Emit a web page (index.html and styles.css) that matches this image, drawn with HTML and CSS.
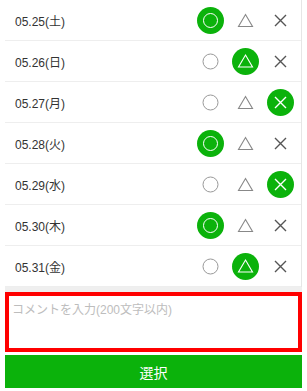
FILE: index.html
```html
<!DOCTYPE html>
<html lang="ja">
<head>
<meta charset="utf-8">
<link rel="stylesheet" href="styles.css">
</head>
<body>
<div class="page">
  <ul class="list">
    <li class="row"><span class="date">05.25(土)</span><span class="opts"><span class="cell"><svg class="on" viewBox="0 0 27 27"><circle cx="13.5" cy="13.5" r="13.5" fill="#0bb20b"/><circle cx="13.5" cy="13.5" r="7" fill="none" stroke="#fff" stroke-width="1"/></svg></span><span class="cell"><svg class="off" viewBox="0 0 27 27"><path d="M13.5 7.5 L20.5 19.5 L6.5 19.5 Z" fill="none" stroke="#888" stroke-width="1.1" stroke-linejoin="miter"/></svg></span><span class="cell"><svg class="off" viewBox="0 0 27 27"><path d="M8 8 L19 19 M19 8 L8 19" stroke="#555" stroke-width="1.4"/></svg></span></span></li>
    <li class="row"><span class="date">05.26(日)</span><span class="opts"><span class="cell"><svg class="off" viewBox="0 0 27 27"><circle cx="13.5" cy="13.5" r="7.5" fill="none" stroke="#999" stroke-width="1"/></svg></span><span class="cell"><svg class="on" viewBox="0 0 27 27"><circle cx="13.5" cy="13.5" r="13.5" fill="#0bb20b"/><path d="M13.5 7 L20.5 19 L6.5 19 Z" fill="none" stroke="#fff" stroke-width="1.1"/></svg></span><span class="cell"><svg class="off" viewBox="0 0 27 27"><path d="M8 8 L19 19 M19 8 L8 19" stroke="#555" stroke-width="1.4"/></svg></span></span></li>
    <li class="row"><span class="date">05.27(月)</span><span class="opts"><span class="cell"><svg class="off" viewBox="0 0 27 27"><circle cx="13.5" cy="13.5" r="7.5" fill="none" stroke="#999" stroke-width="1"/></svg></span><span class="cell"><svg class="off" viewBox="0 0 27 27"><path d="M13.5 7.5 L20.5 19.5 L6.5 19.5 Z" fill="none" stroke="#888" stroke-width="1.1"/></svg></span><span class="cell"><svg class="on" viewBox="0 0 27 27"><circle cx="13.5" cy="13.5" r="13.5" fill="#0bb20b"/><path d="M8 8 L19 19 M19 8 L8 19" stroke="#fff" stroke-width="1.4"/></svg></span></span></li>
    <li class="row"><span class="date">05.28(火)</span><span class="opts"><span class="cell"><svg class="on" viewBox="0 0 27 27"><circle cx="13.5" cy="13.5" r="13.5" fill="#0bb20b"/><circle cx="13.5" cy="13.5" r="7" fill="none" stroke="#fff" stroke-width="1"/></svg></span><span class="cell"><svg class="off" viewBox="0 0 27 27"><path d="M13.5 7.5 L20.5 19.5 L6.5 19.5 Z" fill="none" stroke="#888" stroke-width="1.1"/></svg></span><span class="cell"><svg class="off" viewBox="0 0 27 27"><path d="M8 8 L19 19 M19 8 L8 19" stroke="#555" stroke-width="1.4"/></svg></span></span></li>
    <li class="row"><span class="date">05.29(水)</span><span class="opts"><span class="cell"><svg class="off" viewBox="0 0 27 27"><circle cx="13.5" cy="13.5" r="7.5" fill="none" stroke="#999" stroke-width="1"/></svg></span><span class="cell"><svg class="off" viewBox="0 0 27 27"><path d="M13.5 7.5 L20.5 19.5 L6.5 19.5 Z" fill="none" stroke="#888" stroke-width="1.1"/></svg></span><span class="cell"><svg class="on" viewBox="0 0 27 27"><circle cx="13.5" cy="13.5" r="13.5" fill="#0bb20b"/><path d="M8 8 L19 19 M19 8 L8 19" stroke="#fff" stroke-width="1.4"/></svg></span></span></li>
    <li class="row"><span class="date">05.30(木)</span><span class="opts"><span class="cell"><svg class="on" viewBox="0 0 27 27"><circle cx="13.5" cy="13.5" r="13.5" fill="#0bb20b"/><circle cx="13.5" cy="13.5" r="7" fill="none" stroke="#fff" stroke-width="1"/></svg></span><span class="cell"><svg class="off" viewBox="0 0 27 27"><path d="M13.5 7.5 L20.5 19.5 L6.5 19.5 Z" fill="none" stroke="#888" stroke-width="1.1"/></svg></span><span class="cell"><svg class="off" viewBox="0 0 27 27"><path d="M8 8 L19 19 M19 8 L8 19" stroke="#555" stroke-width="1.4"/></svg></span></span></li>
    <li class="row"><span class="date">05.31(金)</span><span class="opts"><span class="cell"><svg class="off" viewBox="0 0 27 27"><circle cx="13.5" cy="13.5" r="7.5" fill="none" stroke="#999" stroke-width="1"/></svg></span><span class="cell"><svg class="on" viewBox="0 0 27 27"><circle cx="13.5" cy="13.5" r="13.5" fill="#0bb20b"/><path d="M13.5 7 L20.5 19 L6.5 19 Z" fill="none" stroke="#fff" stroke-width="1.1"/></svg></span><span class="cell"><svg class="off" viewBox="0 0 27 27"><path d="M8 8 L19 19 M19 8 L8 19" stroke="#555" stroke-width="1.4"/></svg></span></span></li>
  </ul>
  <div class="comment-area">
    <textarea class="comment" placeholder="コメントを入力(200文字以内)"></textarea>
  </div>
  <button class="submit" type="button">選択</button>
</div>
</body>
</html>
```

FILE: styles.css
```css
html, body {
  margin: 0;
  padding: 0;
  background: #fff;
  font-family: "Liberation Sans", "Noto Sans CJK JP", sans-serif;
}
.page {
  padding: 0 5px;
}
.list {
  list-style: none;
  margin: 0;
  padding: 0;
  background: #fff;
  border-right: 1px solid #e6e6e6;
}
.row {
  display: flex;
  align-items: center;
  justify-content: space-between;
  height: 40px;
  padding: 0 3px 0 10px;
  border-bottom: 1px solid #eeeeee;
}
.date {
  font-size: 12px;
  color: #333;
}
.opts {
  display: flex;
  align-items: center;
}
.cell {
  display: flex;
  justify-content: center;
  align-items: center;
  width: 35px;
  height: 27px;
}
.cell svg {
  width: 27px;
  height: 27px;
  display: block;
}
.comment-area {
  background: #efefef;
  padding-top: 5px;
}
.comment {
  display: block;
  box-sizing: border-box;
  width: 100%;
  height: 60px;
  margin: 0;
  border: 4px solid #ff0000;
  padding: 4px 3px;
  font-family: "Liberation Sans", "Noto Sans CJK JP", sans-serif;
  font-size: 12px;
  color: #333;
  background: #fff;
  resize: none;
  outline: none;
}
.comment::placeholder {
  color: #bdbdbd;
}
.submit {
  display: block;
  width: 100%;
  height: 33px;
  margin-top: 3px;
  border: 0;
  background: #0bb20b;
  color: #fff;
  font-family: "Liberation Sans", "Noto Sans CJK JP", sans-serif;
  font-size: 14px;
  padding: 0;
}
```
